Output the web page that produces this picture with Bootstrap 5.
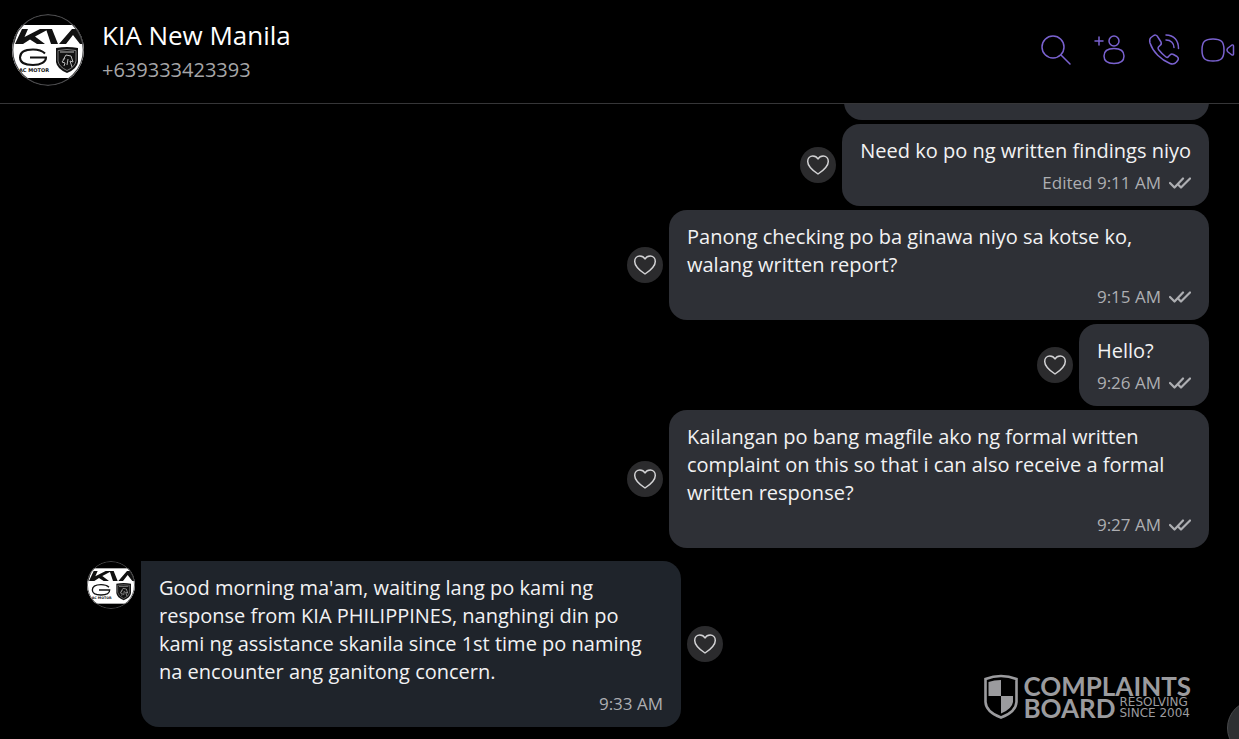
<!DOCTYPE html>
<html lang="fil">
<head>
<meta charset="utf-8">
<meta name="viewport" content="width=device-width, initial-scale=1">
<title>KIA New Manila</title>
<link href="https://cdn.jsdelivr.net/npm/bootstrap@5.3.0/dist/css/bootstrap.min.css" rel="stylesheet">
<style>
body { background: #000; color: #f2f2f3; font-family: "Open Sans", "Noto Sans", sans-serif; }
.chat-header { height: 104px; padding: 0 4px 4px 12px; border-bottom: 1px solid #363638; }
.contact { margin-left: 18px; }
.contact-name { font-size: 26px; line-height: 36px; font-weight: 400; color: #fff; }
.contact-phone { font-size: 20px; line-height: 34px; color: #a6a6a8; }
.tool-btn { color: #7a62d0; width: 36px; height: 36px; }
.tools { gap: 17px; }
.thread { min-height: 0; padding: 0 30px 12px 87px; }
.bubble-row { gap: 6px; }
.bubble { background: #2e3036; border-radius: 18px; padding: 13px 18px 9px; font-size: 20px; line-height: 28px; max-width: 540px; }
.bubble-full { width: 540px; }
.bubble-cut { width: 365px; }
.bubble-in { background: #1f242b; border-top-left-radius: 0; }
.stamp { font-size: 17px; color: #adaeb2; margin-top: 4px; gap: 8px; }
.heart-btn { width: 36px; height: 36px; background: #2b2b2d; color: #d2d2d4; }
.sender-row { margin-top: 9px; }
.brandmark { right: 48px; bottom: 19px; color: #9b9b9e; font-family: Lato, sans-serif; gap: 4px; }
.brandmark-big { font-size: 26px; line-height: 22px; font-weight: 700; }
.brandmark-small { font-family: "DejaVu Sans", sans-serif; font-size: 12px; line-height: 11px; }
.jump-btn { width: 56px; height: 56px; right: -44px; bottom: -17px; background: #2e3032; border: 1px solid #48494b; }
</style>
</head>
<body class="vh-100 overflow-hidden d-flex flex-column position-relative">

<svg class="d-none" aria-hidden="true">
  <symbol id="heart" viewBox="0 0 24 24"><path d="M12 21C8 18.300 1.700 13.600 1.700 8.400C1.700 5.200 4 3 6.800 3C9 3 11 4.200 12 6C13 4.200 15 3 17.200 3C20 3 22.300 5.200 22.300 8.400C22.300 13.600 16 18.300 12 21Z" fill="none" stroke="currentColor" stroke-width="1.500" stroke-linejoin="round"/></symbol>
  <symbol id="ticks" viewBox="0 0 22 12"><path d="M1 6L5.500 10.500L14 1.500M9.500 8L12 10.500L21 1.500" fill="none" stroke="currentColor" stroke-width="2.200" stroke-linecap="round" stroke-linejoin="round"/></symbol>
  <symbol id="avatar" viewBox="0 0 72 72">
    <rect width="72" height="72" fill="#000"/>
    <rect y="11" width="72" height="53" fill="#fff"/>
    <g fill="#111">
      <path d="M0 11H8L2 30H0ZM10 15H16L12.500 23L28 15H37L23 22.500L33 30H25L18 25.500L11 30H3Z"/>
      <path d="M34 15H40L46 30H39ZM47 30L60 15H66L72 24V30H68L61 21L54 30Z"/>
      <path d="M44 34Q55 32 66 34V48Q65 55 55 59Q45 55 44 48Z"/>
    </g>
    <path d="M33 39.500Q29 35.500 21 35.500C12 35.500 8 39 8 43.500S12 51 21 51C29 51 34 48 34 43.500H18" fill="none" stroke="#111" stroke-width="2"/>
    <path d="M46 36.500Q55 34.500 64 36.500V47Q63 53 55 56.500Q47 53 46 47Z" fill="none" stroke="#aaa" stroke-width="0.700"/>
    <path d="M48 38H62M51 46L54 41L59 42L61 48L58 47L60 53M53 44L50 48L53 49L52 52M56 45L55 51" fill="none" stroke="#bbb" stroke-width="1"/>
    <text x="7" y="57.500" font-family="DejaVu Sans, sans-serif" font-size="5" font-weight="700" fill="#111">AC MOTOR</text>
    <circle cx="36" cy="36" r="35.300" fill="none" stroke="#4c4c4e" stroke-width="1.300"/>
  </symbol>
</svg>

<header class="chat-header d-flex align-items-center flex-shrink-0">
  <svg width="72" height="72" class="flex-shrink-0 rounded-circle" role="img" aria-label="KIA New Manila"><use href="#avatar"/></svg>
  <div class="contact me-auto pt-1">
    <h1 class="contact-name m-0">KIA New Manila</h1>
    <div class="contact-phone">+639333423393</div>
  </div>
  <nav class="tools d-flex" aria-label="Conversation tools">
    <button type="button" class="tool-btn btn p-0 border-0" aria-label="Search">
      <svg class="d-block" width="36" height="36" fill="none" stroke="currentColor" stroke-width="1.500" stroke-linecap="round"><circle cx="13" cy="15" r="11"/><path d="M21 23L30 32"/></svg>
    </button>
    <button type="button" class="tool-btn btn p-0 border-0" aria-label="Add participant">
      <svg class="d-block" width="36" height="36" fill="none" stroke="currentColor" stroke-width="1.500" stroke-linecap="round"><path d="M2 9H10M6 5V13"/><circle cx="21" cy="9" r="5"/><path d="M21 16.500C28 16.500 31 19 31 24S28 31.500 21 31.500S11 29 11 24S14 16.500 21 16.500Z"/></svg>
    </button>
    <button type="button" class="tool-btn btn p-0 border-0" aria-label="Call">
      <svg class="d-block" width="36" height="36" fill="none" stroke="currentColor" stroke-width="1.500" stroke-linecap="round" stroke-linejoin="round"><path d="M7 4Q10 2 11.500 4.500L15 10Q16 12 14 13.500L12.500 15Q11.500 16 12.500 17.500Q16 22 20 25Q21.500 26 22.500 24.500L24 23Q25.500 21.500 27.500 22.500L31 24.500Q33 26 32 28L30.500 30Q28 33 24 31.500C15 28 7 20 4 11Q3 7 5 5.500Z"/><path d="M20 3C28 3 32.500 8.500 32.500 16.500M20 8C25 8 28 11.500 28 15.500"/></svg>
    </button>
    <button type="button" class="tool-btn btn p-0 border-0" aria-label="Video call">
      <svg class="d-block" width="36" height="36" fill="none" stroke="currentColor" stroke-width="1.500" stroke-linejoin="round"><path d="M14 7C22 7 25 9.500 25 18S22 29 14 29S3 26.500 3 18S6 7 14 7Z"/><path d="M28 18Q28 17 29 16L33 13Q34.500 12.500 34.500 14V22Q34.500 23.500 33 23L29 20Q28 19 28 18Z"/></svg>
    </button>
  </nav>
</header>

<main class="thread flex-grow-1 overflow-hidden d-flex flex-column justify-content-end gap-1">
  <div class="d-flex justify-content-end flex-shrink-0">
    <div class="bubble bubble-cut"><div>&nbsp;</div><div class="stamp">&nbsp;</div></div>
  </div>
  <div class="bubble-row d-flex justify-content-end align-items-center flex-shrink-0">
    <button type="button" class="heart-btn btn rounded-circle border-0 p-0 d-flex align-items-center justify-content-center" aria-label="Like"><svg width="24" height="24"><use href="#heart"/></svg></button>
    <div class="bubble"><div>Need ko po ng written findings niyo</div><div class="stamp d-flex justify-content-end align-items-center"><span>Edited 9:11 AM</span><svg width="22" height="12"><use href="#ticks"/></svg></div></div>
  </div>
  <div class="bubble-row d-flex justify-content-end align-items-center flex-shrink-0">
    <button type="button" class="heart-btn btn rounded-circle border-0 p-0 d-flex align-items-center justify-content-center" aria-label="Like"><svg width="24" height="24"><use href="#heart"/></svg></button>
    <div class="bubble bubble-full"><div>Panong checking po ba ginawa niyo sa kotse ko,<br>walang written report?</div><div class="stamp d-flex justify-content-end align-items-center"><span>9:15 AM</span><svg width="22" height="12"><use href="#ticks"/></svg></div></div>
  </div>
  <div class="bubble-row d-flex justify-content-end align-items-center flex-shrink-0">
    <button type="button" class="heart-btn btn rounded-circle border-0 p-0 d-flex align-items-center justify-content-center" aria-label="Like"><svg width="24" height="24"><use href="#heart"/></svg></button>
    <div class="bubble"><div>Hello?</div><div class="stamp d-flex justify-content-end align-items-center"><span>9:26 AM</span><svg width="22" height="12"><use href="#ticks"/></svg></div></div>
  </div>
  <div class="bubble-row d-flex justify-content-end align-items-center flex-shrink-0">
    <button type="button" class="heart-btn btn rounded-circle border-0 p-0 d-flex align-items-center justify-content-center" aria-label="Like"><svg width="24" height="24"><use href="#heart"/></svg></button>
    <div class="bubble bubble-full"><div>Kailangan po bang magfile ako ng formal written<br>complaint on this so that i can also receive a formal<br>written response?</div><div class="stamp d-flex justify-content-end align-items-center"><span>9:27 AM</span><svg width="22" height="12"><use href="#ticks"/></svg></div></div>
  </div>
  <div class="bubble-row sender-row d-flex align-items-center flex-shrink-0">
    <svg width="48" height="48" class="align-self-start flex-shrink-0 rounded-circle" role="img" aria-label="KIA New Manila"><use href="#avatar"/></svg>
    <div class="bubble bubble-full bubble-in"><div>Good morning ma'am, waiting lang po kami ng<br>response from KIA PHILIPPINES, nanghingi din po<br>kami ng assistance skanila since 1st time po naming<br>na encounter ang ganitong concern.</div><div class="stamp text-end">9:33 AM</div></div>
    <button type="button" class="heart-btn btn rounded-circle border-0 p-0 d-flex align-items-center justify-content-center" aria-label="Like"><svg width="24" height="24"><use href="#heart"/></svg></button>
  </div>
</main>

<div class="brandmark position-absolute d-flex align-items-center">
  <svg width="36" height="46" viewBox="0 0 36 46" aria-hidden="true"><path d="M2.500 5Q18 -1 33.500 5V28Q33 38 18 43.500Q3 38 2.500 28Z" fill="none" stroke="currentColor" stroke-width="2.600"/><path d="M18 6V22H5.500V8Q11 6 18 6ZM18 22H30V28Q29 35 18 39.500Z" fill="currentColor"/></svg>
  <div>
    <div class="brandmark-big">COMPLAINTS</div>
    <div class="d-flex align-items-center gap-1"><span class="brandmark-big">BOARD</span><span class="brandmark-small">RESOLVING<br>SINCE 2004</span></div>
  </div>
</div>
<button type="button" class="jump-btn btn rounded-circle position-absolute p-0" aria-label="Jump to latest message"></button>

<script src="https://cdn.jsdelivr.net/npm/bootstrap@5.3.0/dist/js/bootstrap.bundle.min.js"></script>
</body>
</html>
